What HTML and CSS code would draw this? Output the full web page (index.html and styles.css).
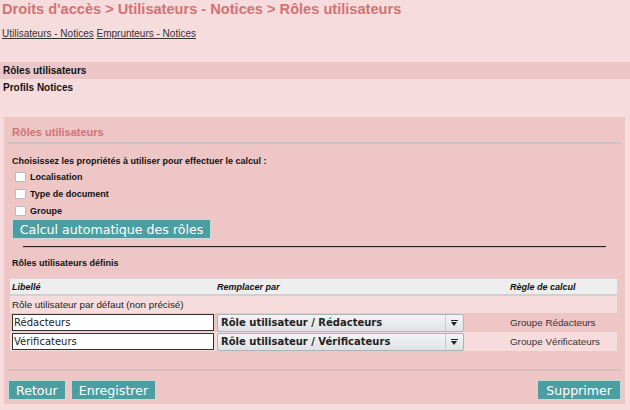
FILE: index.html
```html
<!DOCTYPE html>
<html lang="fr">
<head>
<meta charset="utf-8">
<title>Rôles utilisateurs</title>
<link rel="stylesheet" href="styles.css">
</head>
<body>
<h1 class="page-title">Droits d'accès &gt; Utilisateurs - Notices &gt; Rôles utilisateurs</h1>
<nav class="tabs">
  <a href="#">Utilisateurs - Notices</a> <a href="#">Emprunteurs - Notices</a>
</nav>
<ul class="submenu">
  <li class="active">Rôles utilisateurs</li>
  <li>Profils Notices</li>
</ul>
<form class="panel">
  <h3 class="panel-title">Rôles utilisateurs</h3>
  <div class="panel-body">
    <p class="label-bold">Choisissez les propriétés à utiliser pour effectuer le calcul :</p>
    <div class="checks">
      <label class="check"><span class="box"></span>Localisation</label>
      <label class="check"><span class="box"></span>Type de document</label>
      <label class="check"><span class="box"></span>Groupe</label>
    </div>
    <button type="button" class="btn btn-calc">Calcul automatique des rôles</button>
    <hr class="sep">
    <p class="label-bold defined">Rôles utilisateurs définis</p>
    <table class="roles">
      <thead>
        <tr><th class="c1">Libellé</th><th class="c2">Remplacer par</th><th class="c3">Règle de calcul</th></tr>
      </thead>
      <tbody>
        <tr class="odd first"><td colspan="3">Rôle utilisateur par défaut (non précisé)</td></tr>
        <tr class="even">
          <td><span class="input">Rédacteurs</span></td>
          <td><span class="select">Rôle utilisateur / Rédacteurs<span class="arrow"></span></span></td>
          <td class="rule">Groupe Rédacteurs</td>
        </tr>
        <tr class="odd">
          <td><span class="input caret">Vérificateurs</span></td>
          <td><span class="select">Rôle utilisateur / Vérificateurs<span class="arrow"></span></span></td>
          <td class="rule">Groupe Vérificateurs</td>
        </tr>
      </tbody>
    </table>
  </div>
  <div class="actions">
    <div class="left">
      <button type="button" class="btn">Retour</button>
      <button type="button" class="btn">Enregistrer</button>
    </div>
    <button type="button" class="btn">Supprimer</button>
  </div>
</form>
</body>
</html>
```
FILE: styles.css
```css
* { box-sizing: border-box; }
html, body { margin: 0; padding: 0; }
body {
  background: #f7dcdd;
  font-family: "Liberation Sans", Arial, sans-serif;
  font-size: 10px;
  color: #111;
  width: 630px;
  height: 410px;
  overflow: hidden;
}
.page-title {
  margin: 0;
  padding: 0 0 0 2px;
  height: 19px;
  line-height: 18px;
  font-size: 14.6px;
  font-weight: bold;
  color: #d17373;
  white-space: nowrap;
}
.tabs {
  padding: 8px 0 0 2px;
  height: 33px;
  line-height: 13px;
  font-size: 10px;
}
.tabs a { color: #333; text-decoration: underline; }
.submenu {
  list-style: none;
  margin: 10px 0 0 0;
  padding: 0;
}
.submenu li {
  height: 17px;
  line-height: 17px;
  padding-left: 3px;
  font-weight: bold;
  font-size: 10px;
}
.submenu li.active { background: #ecc6c6; }
.panel {
  margin: 21px 5px 0 4px;
  background: #eec6c6;
  padding: 4px;
}
.panel-title {
  margin: 0;
  font-size: 11px;
  font-weight: bold;
  color: #d17373;
  height: 23px;
  line-height: 22px;
  padding-left: 4px;
  border-bottom: 2px solid #c9c9c9;
}
.panel-body { padding: 11px 0 0 0; }
.label-bold {
  margin: 0 0 0 4px;
  font-weight: bold;
  font-size: 9px;
  line-height: 12px;
  height: 12px;
}
.checks { margin-top: 1px; }
.check {
  display: flex;
  align-items: center;
  height: 17px;
  padding-left: 7px;
  font-weight: bold;
  font-size: 9px;
}
.box {
  width: 11px;
  height: 10px;
  background: #fff;
  border: 1px solid #bbb;
  border-radius: 1px;
  margin-right: 4px;
}
.btn {
  background: #4b9fa2;
  color: #fff;
  border: 1px solid #c9d8d8;
  font-family: "DejaVu Sans", sans-serif;
  font-size: 12.6px;
  height: 20px;
  line-height: 17px;
  padding: 0 6px;
  margin: 0;
  white-space: nowrap;
  cursor: pointer;
}
.btn-calc { display: block; margin: 0 0 0 4px; width: 199px; padding: 0; }
.sep {
  width: 95%;
  margin: 7px auto 0;
  border: 0;
  border-top: 1px solid #222;
  border-bottom: 1px solid #bbb;
  height: 2px;
}
.defined { margin-top: 9px; }
.roles {
  margin: 9px 0 0 2px;
  width: 607px;
  border-collapse: separate;
  border-spacing: 0;
  font-size: 9.8px;
}
.roles th {
  background: #eeeeee;
  text-align: left;
  font-style: italic;
  font-weight: bold;
  font-size: 9px;
  height: 18px;
  padding: 0 2px;
  border-top: 1px solid #d8d8d8;
  border-bottom: 2px solid #d0d0d0;
}
.roles th.c1 { width: 205px; }
.roles th.c2 { width: 293px; }
.roles td { height: 19px; padding: 0 0 0 2px; color: #222; }
.roles tr.first td { height: 17px; }
.roles tr.odd td { background: #f7dcdd; }
.roles tr.even td { background: #eec6c6; }
.roles td.rule { color: #333; }
.input {
  display: block;
  width: 202px;
  height: 17px;
  background: #fff;
  border: 1px solid #333;
  font-family: "DejaVu Sans", sans-serif;
  font-size: 10px;
  line-height: 15px;
  padding-left: 1px;
  color: #222;
}
.select {
  position: relative;
  display: block;
  width: 247px;
  height: 18px;
  background: linear-gradient(#f2f4f5, #dfe3e6);
  border: 1px solid #aab4bb;
  border-radius: 2px;
  font-family: "DejaVu Sans", sans-serif;
  font-weight: bold;
  font-size: 10px;
  line-height: 16px;
  padding-left: 3px;
  color: #222;
}
.select .arrow {
  position: absolute;
  right: 0;
  top: 0;
  width: 18px;
  height: 16px;
  border-left: 1px solid #c4cbd0;
}
.select .arrow::before {
  content: "";
  position: absolute;
  left: 5px;
  top: 5px;
  width: 7px;
  height: 1px;
  background: #222;
}
.select .arrow::after {
  content: "";
  position: absolute;
  left: 5px;
  top: 7px;
  border-left: 3.5px solid transparent;
  border-right: 3.5px solid transparent;
  border-top: 4px solid #222;
}
.actions {
  margin-top: 18px;
  border-top: 2px solid #dcc0c0;
  padding-top: 9px;
  display: flex;
  justify-content: space-between;
}
.actions .left { display: flex; gap: 5px; }
.actions .btn { height: 20px; padding: 0 7px; }
.actions > .btn { padding: 0 8px; }
```
